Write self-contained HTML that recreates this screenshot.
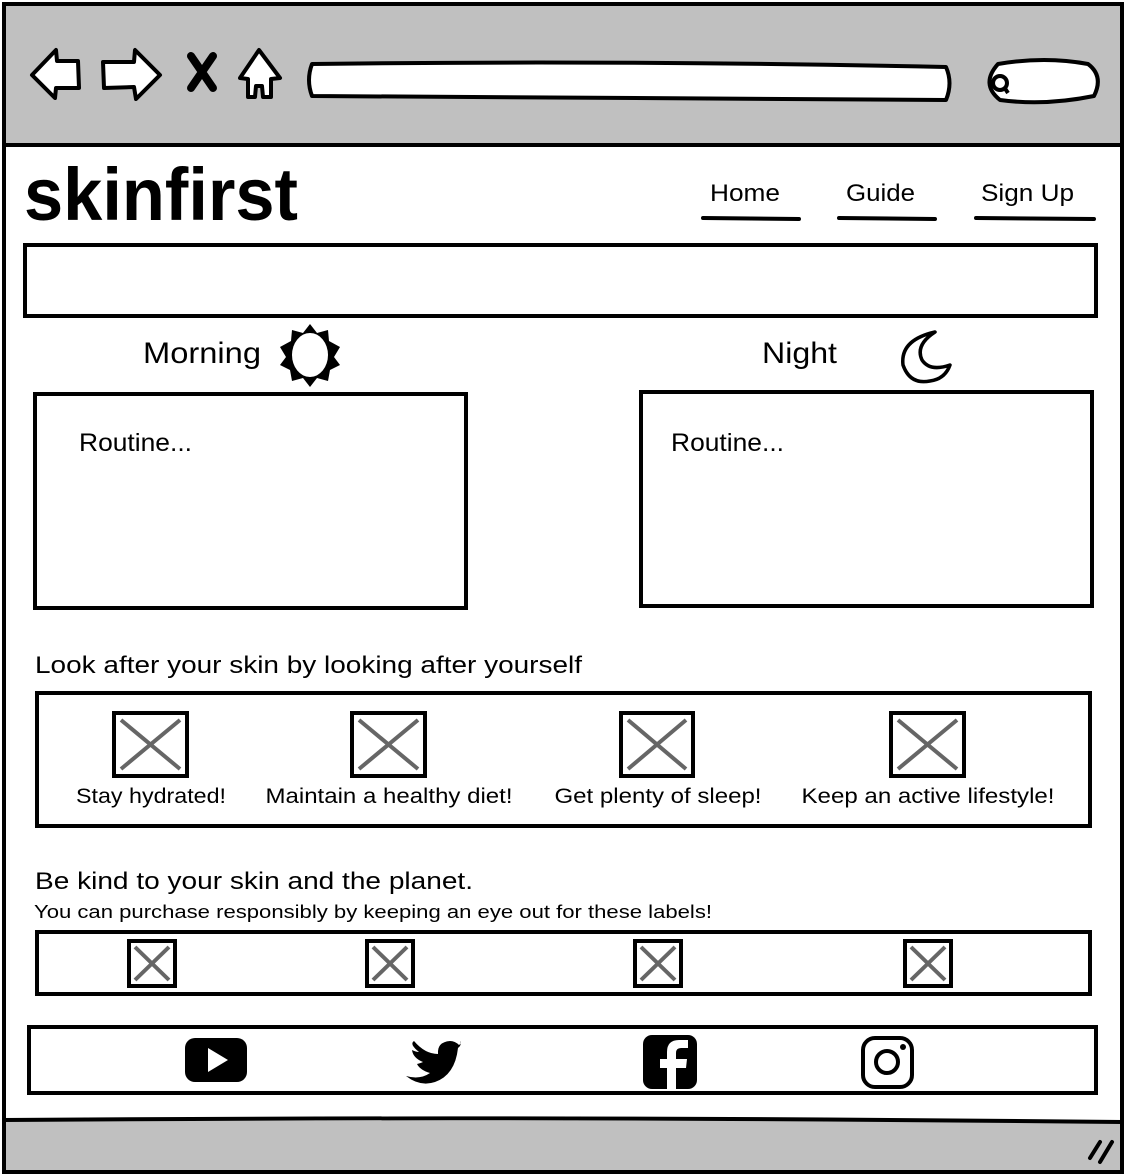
<!DOCTYPE html>
<html><head><meta charset="utf-8"><style>
html,body{margin:0;padding:0;background:#fff;width:1128px;height:1176px;overflow:hidden}
svg{display:block}
text{font-family:"Liberation Sans",sans-serif;fill:#000}
</style></head><body>
<svg width="1128" height="1176" viewBox="0 0 1128 1176" xmlns="http://www.w3.org/2000/svg">
<rect x="4" y="4" width="1118" height="1168" fill="#fff" stroke="#000" stroke-width="4"/>
<rect x="6" y="6" width="1114" height="138" fill="#c0c0c0"/>
<line x1="4" y1="145" x2="1122" y2="145" stroke="#000" stroke-width="4"/>
<rect x="6" y="1121" width="1114" height="49" fill="#c0c0c0"/>
<path d="M4 1120 Q560 1116 1122 1122" stroke="#000" stroke-width="4" fill="none"/>
<path d="M1090 1158 L1100 1142 M1100 1162 L1112 1142" stroke="#000" stroke-width="4" stroke-linecap="round"/>
<g fill="#fff" stroke="#000" stroke-width="4" stroke-linejoin="round">
<path d="M32 75 L56 50 L57 61 L78 61 L79 88 L56 88 L55 98 Z"/>
<path d="M160 75 L135 50 L134 62 L103 62 L104 88 L134 87 L136 99 Z"/>
<path d="M240 78 L259 50 L280 78 L271 79 L271 97 L263 97 L262 86 L256 86 L255 97 L248 97 L248 79 Z"/>
<path d="M312 64 Q620 60 946 67 Q953 83 946 100 Q620 98 312 96 Q306 80 312 64 Z"/>
<path d="M998 64 Q1045 56 1088 64 Q1104 76 1094 96 Q1045 106 1000 100 Q980 84 998 64 Z"/>
</g>
<path d="M191 56 L213 88 M213 56 L191 88" stroke="#000" stroke-width="8" stroke-linecap="round"/>
<circle cx="1000" cy="83" r="7" fill="none" stroke="#000" stroke-width="4"/>
<line x1="1004" y1="87" x2="1008" y2="93" stroke="#000" stroke-width="4"/>
<text x="24" y="220" font-size="74" font-weight="bold" textLength="274" lengthAdjust="spacingAndGlyphs">skinfirst</text>
<text x="710" y="201" font-size="24" textLength="70" lengthAdjust="spacingAndGlyphs">Home</text>
<text x="846" y="201" font-size="24" textLength="69" lengthAdjust="spacingAndGlyphs">Guide</text>
<text x="981" y="201" font-size="24" textLength="93" lengthAdjust="spacingAndGlyphs">Sign Up</text>
<g stroke="#000" stroke-width="4" stroke-linecap="round">
<line x1="703" y1="218" x2="799" y2="219"/>
<line x1="839" y1="218" x2="935" y2="219"/>
<line x1="976" y1="218" x2="1094" y2="219"/>
</g>
<g fill="none" stroke="#000" stroke-width="4">
<rect x="25" y="245" width="1071" height="71"/>
<rect x="35" y="394" width="431" height="214"/>
<rect x="641" y="392" width="451" height="214"/>
<rect x="37" y="693" width="1053" height="133"/>
<rect x="37" y="932" width="1053" height="62"/>
<rect x="29" y="1027" width="1067" height="66"/>
</g>
<text x="143" y="363" font-size="30" textLength="118" lengthAdjust="spacingAndGlyphs">Morning</text>
<text x="762" y="363" font-size="30" textLength="75" lengthAdjust="spacingAndGlyphs">Night</text>
<g transform="translate(310,355)">
<polygon points="0,-31 7,-22 18,-25 19,-14 30,-8 24,2 30,10 20,15 18,26 7,23 0,32 -7,23 -18,26 -20,15 -30,10 -24,2 -30,-8 -19,-14 -18,-25 -7,-22" fill="#000"/>
<ellipse cx="0" cy="0" rx="18" ry="22" fill="#fff"/>
</g>
<path d="M935 332 Q900 340 903 365 Q910 385 930 381 Q945 379 950 365 Q930 372 922 360 Q915 345 935 332 Z" fill="#fff" stroke="#000" stroke-width="3.5" stroke-linejoin="round"/>
<text x="79" y="451" font-size="25" textLength="113" lengthAdjust="spacingAndGlyphs">Routine...</text>
<text x="671" y="451" font-size="25" textLength="113" lengthAdjust="spacingAndGlyphs">Routine...</text>
<text x="35" y="673" font-size="24" textLength="547" lengthAdjust="spacingAndGlyphs">Look after your skin by looking after yourself</text>
<g fill="#fff" stroke="#000" stroke-width="4">
<rect x="114" y="713" width="73" height="63"/>
<rect x="352" y="713" width="73" height="63"/>
<rect x="621" y="713" width="72" height="63"/>
<rect x="891" y="713" width="73" height="63"/>
<rect x="129" y="941" width="46" height="45"/>
<rect x="367" y="941" width="46" height="45"/>
<rect x="635" y="941" width="46" height="45"/>
<rect x="905" y="941" width="46" height="45"/>
</g>
<g stroke="#666" stroke-width="4">
<path d="M121 720 L180 769 M180 720 L121 769"/>
<path d="M359 720 L418 769 M418 720 L359 769"/>
<path d="M628 720 L686 769 M686 720 L628 769"/>
<path d="M898 720 L957 769 M957 720 L898 769"/>
<path d="M135 947 L169 980 M169 947 L135 980"/>
<path d="M373 947 L407 980 M407 947 L373 980"/>
<path d="M641 947 L675 980 M675 947 L641 980"/>
<path d="M911 947 L945 980 M945 947 L911 980"/>
</g>
<g font-size="21" text-anchor="middle">
<text x="151" y="803" textLength="150" lengthAdjust="spacingAndGlyphs">Stay hydrated!</text>
<text x="389" y="803" textLength="247" lengthAdjust="spacingAndGlyphs">Maintain a healthy diet!</text>
<text x="658" y="803" textLength="207" lengthAdjust="spacingAndGlyphs">Get plenty of sleep!</text>
<text x="928" y="803" textLength="253" lengthAdjust="spacingAndGlyphs">Keep an active lifestyle!</text>
</g>
<text x="35" y="889" font-size="24" textLength="438" lengthAdjust="spacingAndGlyphs">Be kind to your skin and the planet.</text>
<text x="34" y="918" font-size="18" textLength="678" lengthAdjust="spacingAndGlyphs">You can purchase responsibly by keeping an eye out for these labels!</text>
<rect x="185" y="1038" width="62" height="44" rx="10" fill="#000"/>
<polygon points="208,1048 208,1072 228,1060" fill="#fff"/>
<path d="M406 1076 Q420 1080 430 1073 Q420 1070 417 1064 Q421 1063 423 1062 Q413 1058 412 1050 Q416 1052 419 1052 Q409 1044 414 1041 Q425 1054 438 1054 Q437 1042 450 1041 Q455 1041 459 1045 Q462 1043 460 1041 Q462 1045 458 1048 Q455 1075 435 1082 Q420 1087 406 1076 Z" fill="#000"/>
<rect x="643" y="1035" width="54" height="54" rx="9" fill="#000"/>
<path d="M676 1089 L676 1068 L686 1068 L687 1059 L676 1059 L676 1053 Q676 1048 681 1048 L688 1048 L688 1040 L679 1040 Q667 1040 667 1052 L667 1059 L660 1059 L660 1068 L667 1068 L667 1089 Z" fill="#fff"/>
<rect x="863" y="1038" width="49" height="49" rx="12" fill="none" stroke="#000" stroke-width="4"/>
<circle cx="887" cy="1062" r="11" fill="none" stroke="#000" stroke-width="4"/>
<circle cx="903" cy="1047" r="3" fill="#000"/>
</svg>
</body></html>
